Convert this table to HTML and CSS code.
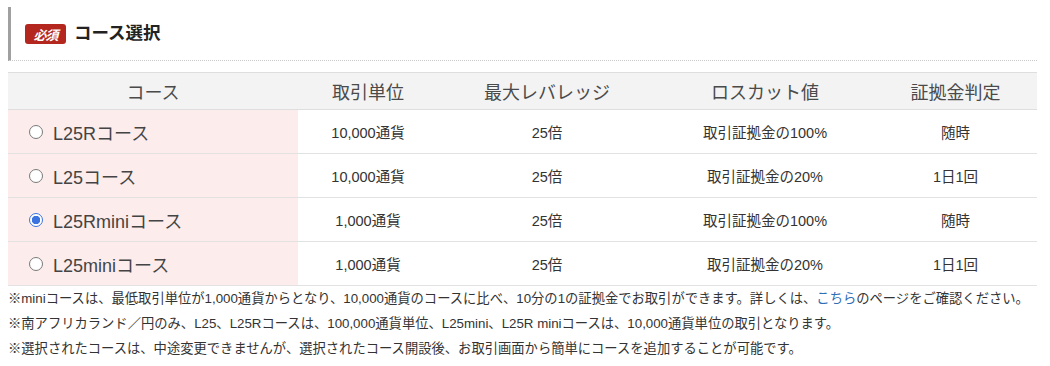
FILE: index.html
```html
<!DOCTYPE html>
<html lang="ja">
<head>
<meta charset="utf-8">
<title>コース選択</title>
<link rel="stylesheet" href="styles.css">
</head>
<body>
<div class="page">
  <div class="heading">
    <span class="badge">必須</span>
    <h2 class="title">コース選択</h2>
  </div>
  <table class="courses">
    <colgroup>
      <col class="c1"><col class="c2"><col class="c3"><col class="c4"><col class="c5">
    </colgroup>
    <thead>
      <tr><th>コース</th><th>取引単位</th><th>最大レバレッジ</th><th>ロスカット値</th><th>証拠金判定</th></tr>
    </thead>
    <tbody>
      <tr>
        <td class="course"><label><input type="radio" name="course" class="radio">L25Rコース</label></td>
        <td>10,000通貨</td><td>25倍</td><td>取引証拠金の100%</td><td>随時</td>
      </tr>
      <tr>
        <td class="course"><label><input type="radio" name="course" class="radio">L25コース</label></td>
        <td>10,000通貨</td><td>25倍</td><td>取引証拠金の20%</td><td>1日1回</td>
      </tr>
      <tr>
        <td class="course"><label><input type="radio" name="course" class="radio" checked>L25Rminiコース</label></td>
        <td>1,000通貨</td><td>25倍</td><td>取引証拠金の100%</td><td>随時</td>
      </tr>
      <tr>
        <td class="course"><label><input type="radio" name="course" class="radio">L25miniコース</label></td>
        <td>1,000通貨</td><td>25倍</td><td>取引証拠金の20%</td><td>1日1回</td>
      </tr>
    </tbody>
  </table>
  <div class="notes">
    <p>※miniコースは、最低取引単位が1,000通貨からとなり、10,000通貨のコースに比べ、10分の1の証拠金でお取引ができます。詳しくは、<a href="#" class="link">こちら</a>のページをご確認ください。</p>
    <p>※南アフリカランド／円のみ、L25、L25Rコースは、100,000通貨単位、L25mini、L25R miniコースは、10,000通貨単位の取引となります。</p>
    <p>※選択されたコースは、中途変更できませんが、選択されたコース開設後、お取引画面から簡単にコースを追加することが可能です。</p>
  </div>
</div>
</body>
</html>
```
FILE: styles.css
```css
* { box-sizing: border-box; }
html, body { margin: 0; padding: 0; background: #fff; }
body {
  font-family: "Liberation Sans", "Noto Sans CJK JP", sans-serif;
  color: #333;
}
.page {
  width: 1037px;
  padding: 7px 0 0 8px;
}
.heading {
  display: flex;
  align-items: center;
  gap: 8px;
  height: 54px;
  padding-left: 14px;
  padding-top: 1px;
  border-left: 3px solid #a0a0a0;
  border-bottom: 1px dotted #c8c8c8;
}
.badge {
  display: inline-flex;
  align-items: center;
  justify-content: center;
  flex: none;
  width: 41px;
  height: 20px;
  border-radius: 3px;
  background: #b3271f;
  color: #fff;
  font-size: 13px;
  font-weight: bold;
  font-style: italic;
  letter-spacing: -1px;
}
.title {
  margin: 0;
  font-size: 17.5px;
  font-weight: bold;
  color: #222;
  line-height: 1;
}
.courses {
  margin-top: 11px;
  width: 1029px;
  border-collapse: collapse;
  table-layout: fixed;
}
.c1 { width: 290px; }
.c2 { width: 140px; }
.c3 { width: 218px; }
.c4 { width: 218px; }
.c5 { width: 163px; }
.courses th {
  height: 37px;
  padding: 0;
  background: #f3f3f3;
  border-top: 1px solid #dedede;
  border-bottom: 1px solid #dedede;
  font-size: 18px;
  font-weight: normal;
  color: #4a4a4a;
  text-align: center;
}
.courses td {
  height: 44px;
  padding: 0;
  border-bottom: 1px solid #e2e2e2;
  font-size: 14.5px;
  color: #333;
  text-align: center;
}
.courses td.course {
  background: #fcecec;
  text-align: left;
  padding-left: 21px;
  font-size: 18px;
  color: #444;
}
.course label {
  display: flex;
  align-items: center;
  gap: 10px;
}
.radio {
  appearance: none;
  -webkit-appearance: none;
  margin: 0;
  width: 14px;
  height: 14px;
  border-radius: 50%;
  border: 1px solid #7a7a7a;
  background: #fff;
  flex: none;
}
.radio:checked {
  border: 1px solid #3b74e0;
  background: radial-gradient(circle, #3b74e0 0 4px, #fff 4.5px);
}
.notes {
  font-size: 13.3px;
  line-height: 25px;
  color: #333;
}
.notes p { margin: 0; white-space: nowrap; }
.link { color: #2f6db5; text-decoration: none; }
```
